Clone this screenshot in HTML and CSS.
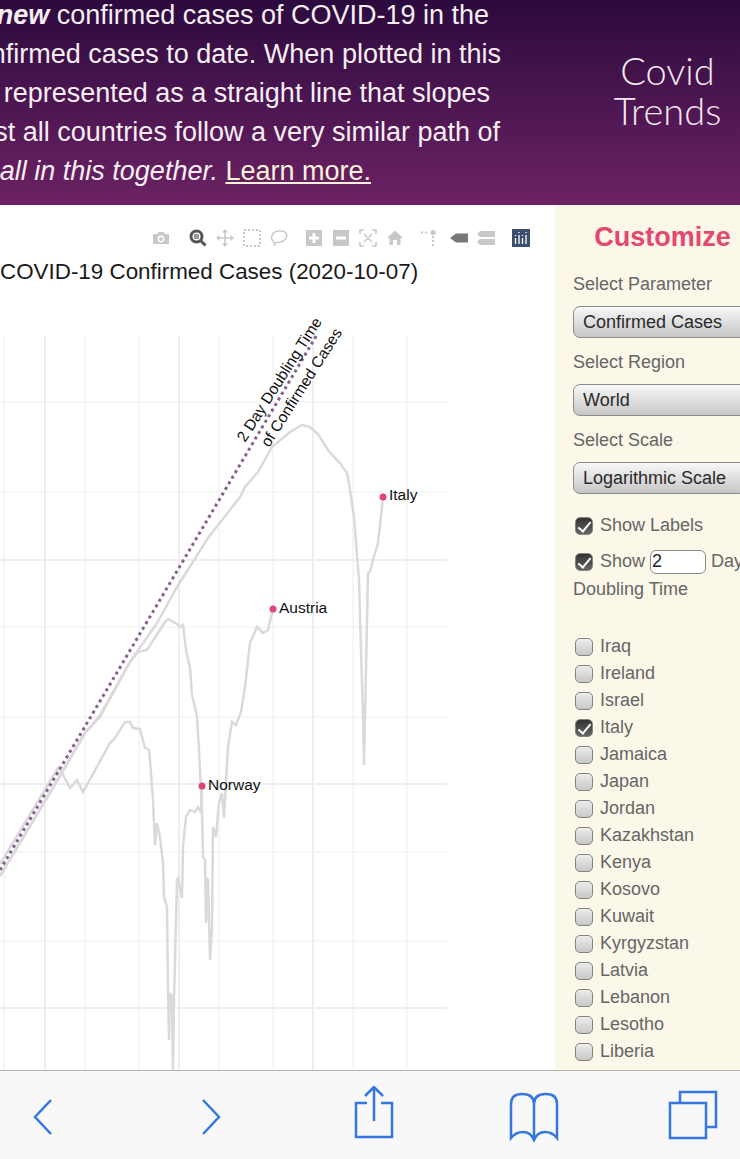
FILE: index.html
```html
<!DOCTYPE html>
<html lang="en">
<head>
  <meta charset="UTF-8">
  <title>Covid Trends</title>
  <link rel="stylesheet" href="styles.css">
</head>
<body>
  <!-- Header -->
  <div class="header">
    <div class="intro">
      <p class="intro-line line-1"><span>of</span><strong><em>new</em></strong><span>confirmed cases of COVID-19 in the</span></p>
      <p class="intro-line line-2">confirmed cases to date. When plotted in this</p>
      <p class="intro-line line-3">is represented as a straight line that slopes</p>
      <p class="intro-line line-4">almost all countries follow a very similar path of</p>
      <p class="intro-line line-5"><em>We're all in this together.</em><a class="learn-more" href="#">Learn more.</a></p>
    </div>
    <div class="brand">Covid<br>Trends</div>
  </div>

  <div class="main">
    <!-- Chart -->
    <div class="chart">
      <div class="modebar">
        <svg class="mode-icon icon-camera" viewBox="0 0 18 18"><path class="fill" d="M1 5h4l1.500-2h5L13 5h4v10H1z"/><circle cx="9" cy="10" r="3.400" fill="#fff"/><circle cx="9" cy="10" r="2" class="fill"/></svg>
        <svg class="mode-icon" viewBox="0 0 18 18"><circle cx="7.500" cy="7.500" r="5.500" fill="none" stroke="#555" stroke-width="3"/><rect x="5" y="5" width="5" height="5" fill="#999"/><path d="M11.500 11.500L16.500 16.500" stroke="#555" stroke-width="3"/></svg>
        <svg class="mode-icon" viewBox="0 0 18 18"><path class="line" d="M9 1v16M1 9h16"/><path class="fill" d="M9 0l3 3.500H6zM9 18l-3-3.500h6zM0 9l3.500-3v6zM18 9l-3.500 3V6z"/></svg>
        <svg class="mode-icon" viewBox="0 0 18 18"><rect class="dash" x="1" y="1" width="16" height="16"/></svg>
        <svg class="mode-icon" viewBox="0 0 18 18"><path class="line" d="M5 14C1 12 .5 7 3.500 4S13 1 15.500 3.500s1 7-2.500 8.500-6 1.500-8 2zM5 14l-.5 3"/></svg>
        <svg class="mode-icon icon-plus" viewBox="0 0 18 18"><path class="fill" fill-rule="evenodd" d="M1 1h16v16H1zM7.500 4v3.500H4v3h3.500V14h3v-3.500H14v-3h-3.500V4z"/></svg>
        <svg class="mode-icon" viewBox="0 0 18 18"><path class="fill" fill-rule="evenodd" d="M1 1h16v16H1zM4 7.500v3h10v-3z"/></svg>
        <svg class="mode-icon" viewBox="0 0 18 18"><path class="line" d="M1 5V1h4M13 1h4v4M17 13v4h-4M5 17H1v-4M5 5l8 8M13 5l-8 8"/></svg>
        <svg class="mode-icon" viewBox="0 0 18 18"><path class="fill" d="M9 1.500L17 9h-2.500v7H11v-5H7v5H3.500V9H1z"/></svg>
        <svg class="mode-icon icon-spike" viewBox="0 0 18 18"><circle class="fill" cx="13" cy="3.500" r="2.500"/><path class="dash" d="M1 3.500h8M13 7v10"/></svg>
        <svg class="mode-icon icon-closest" viewBox="0 0 18 18"><path class="fill-dark" d="M0 9l6-4.500h12v9H6z"/></svg>
        <svg class="mode-icon" viewBox="0 0 18 18"><path class="fill" d="M3 2h15v6H3L0 5zM3 10h15v6H3l-3-3z"/></svg>
        <svg class="mode-icon icon-logo" viewBox="0 0 18 18"><rect width="18" height="18" fill="#3d4f6e"/><path d="M3.500 9v6M7 6v9M10.500 9v6M14 6v9" stroke="#fff" stroke-width="1.300"/><path d="M3.500 6v1M7 3v1M10.500 6v1M14 3v1" stroke="#fff" stroke-width="1.300"/></svg>
      </div>
      <div class="chart-title">COVID-19 Confirmed Cases (2020-10-07)</div>
      <svg class="plot" viewBox="0 300 555 771">
        <g class="grid-major">
          <path d="M45 335V1071M179 335V1071M313 335V1071"/>
          <path d="M0 560H447M0 784H447M0 1008H447"/>
        </g>
        <g class="grid-minor">
          <path d="M4 335V1071M85 335V1071M139 335V1071M219 335V1071M273 335V1071M353 335V1071M407 335V1071"/>
          <path d="M0 402H447M0 492H447M0 627H447M0 717H447M0 852H447M0 941H447"/>
        </g>
        <!-- Italy -->
        <polyline class="trace" points="0,876 60,776 85,733 100,715 130,662 157,623 177,587 208,538 240,497 245,487 258,472 272,447 290,432 302,425 310,427 318,434 328,450 335,458 340,463 347,473 349,483 354,517 359,580 363,717 364,765 368,573 370,572 373,560 378,543 382,507 383,497"/>
        <!-- Austria -->
        <polyline class="trace" points="0,876 60,776 85,733 100,717 130,662 138,652 147,650 165,622 168,619 177,624 180,627 183,625 186,650 190,668 192,695 197,716 199,750 202,810 203,857 205,860 206,923 207,878 208,880 210,960 212,930 213,827 216,837 219,803 222,793 224,818 228,747 232,722 236,725 241,712 245,687 250,643 257,627 263,633 268,630 273,609"/>
        <!-- Norway -->
        <polyline class="trace" points="0,864 58,768 62,773 70,788 77,780 83,792 110,743 115,738 125,722 130,722 133,728 140,729 145,748 149,750 150,760 153,800 155,845 157,823 160,837 163,863 164,897 167,907 168,990 169,1040 170,993 172,997 173,1071 174,1000 177,880 178,878 182,898 183,847 186,817 190,810 195,812 198,807 201,813 202,786"/>
        <line class="doubling" x1="0" y1="870" x2="318" y2="333"/>
        <text class="note" transform="translate(245 443) rotate(-57.500)">2 Day Doubling Time</text>
        <text class="note" transform="translate(269 448) rotate(-57.500)">of Confirmed Cases</text>
        <circle class="marker" cx="383" cy="497" r="3.500"/>
        <circle class="marker" cx="273" cy="609" r="3.500"/>
        <circle class="marker" cx="202" cy="786" r="3.500"/>
        <text class="tag" x="389" y="500">Italy</text>
        <text class="tag" x="279" y="613">Austria</text>
        <text class="tag" x="208" y="790">Norway</text>
      </svg>
    </div>

    <!-- Sidebar -->
    <div class="sidebar">
      <h2 class="sidebar-title">Customize</h2>
      <label class="field-label">Select Parameter</label>
      <select class="field-select"><option>Confirmed Cases</option></select>
      <label class="field-label">Select Region</label>
      <select class="field-select"><option>World</option></select>
      <label class="field-label">Select Scale</label>
      <select class="field-select"><option>Logarithmic Scale</option></select>

      <label class="check-row labels-row"><input type="checkbox" checked> Show Labels</label>
      <label class="check-row show-row"><input type="checkbox" checked> Show <input class="days-input" type="text" value="2"> Day</label>
      <div class="doubling-label">Doubling Time</div>

      <div class="country-list">
        <label class="check-row first-row"><input type="checkbox"> Iraq</label>
        <label class="check-row"><input type="checkbox"> Ireland</label>
        <label class="check-row"><input type="checkbox"> Israel</label>
        <label class="check-row"><input type="checkbox" checked> Italy</label>
        <label class="check-row"><input type="checkbox"> Jamaica</label>
        <label class="check-row"><input type="checkbox"> Japan</label>
        <label class="check-row"><input type="checkbox"> Jordan</label>
        <label class="check-row"><input type="checkbox"> Kazakhstan</label>
        <label class="check-row"><input type="checkbox"> Kenya</label>
        <label class="check-row"><input type="checkbox"> Kosovo</label>
        <label class="check-row"><input type="checkbox"> Kuwait</label>
        <label class="check-row"><input type="checkbox"> Kyrgyzstan</label>
        <label class="check-row"><input type="checkbox"> Latvia</label>
        <label class="check-row"><input type="checkbox"> Lebanon</label>
        <label class="check-row"><input type="checkbox"> Lesotho</label>
        <label class="check-row"><input type="checkbox"> Liberia</label>
        <label class="check-row"><input type="checkbox"></label>
      </div>
    </div>
  </div>

  <!-- Browser toolbar -->
  <div class="toolbar">
    <svg class="tool tool-back" viewBox="0 0 20 56"><path d="M18 14L2 31l16 17"/></svg>
    <svg class="tool tool-forward" viewBox="0 0 20 56"><path d="M2 14l16 17L2 48"/></svg>
    <svg class="tool tool-share" viewBox="0 0 40 56"><path d="M13 17H2v34h36V17H27M20 1v34M11 10l9-9 9 9"/></svg>
    <svg class="tool tool-book" viewBox="0 0 50 56"><path d="M25 54V18C25 11 20 8 13 8S2 11 2 18v34c4-5 8-6 12-6 5 0 9 3 11 8 2-5 6-8 11-8 4 0 8 1 12 6V18C48 11 44 8 37 8S25 11 25 18"/></svg>
    <svg class="tool tool-tabs" viewBox="0 0 50 56"><path d="M2 17h36v35H2zM12 17V6h36v35H38"/></svg>
  </div>
</body>
</html>
```

FILE: styles.css
```css
* {
  box-sizing: border-box;
}

:root {
  --cream: #fbf7e9;
  --pink: #e4476f;
  --label: #666;
  --icon: #c8c8c8;
  --ios-blue: #3477e0;
}

html,
body {
  margin: 0;
  height: 100%;
  overflow: hidden;
}

body {
  display: flex;
  flex-direction: column;
  width: 740px;
  height: 1159px;
  font-family: "Liberation Sans", Arial, sans-serif;
  background: #fff;
}

/* Header */
.header {
  display: flex;
  flex: 0 0 205px;
  overflow: hidden;
  background: linear-gradient(#2c0a3e, #6c2264);
  color: #f6eef2;
}

.intro {
  flex: 0 0 555px;
  min-width: 0;
  margin-top: -4px;
  font-size: 27px;
  line-height: 39px;
}

.intro-line {
  margin: 0;
  white-space: nowrap;
  display: flex;
  justify-content: flex-end;
  gap: 0.278em;
}

.line-1 { padding-right: 66px; }
.line-2 { padding-right: 54px; }
.line-3 { padding-right: 65px; }
.line-4 { padding-right: 55px; }
.line-5 { padding-right: 184px; }

.learn-more {
  color: #fbf1d8;
}

.brand {
  flex: 1;
  padding: 50px 0 0 40px;
  font-family: Lato, sans-serif;
  font-weight: 300;
  font-size: 38px;
  line-height: 40px;
  text-align: center;
  color: #f3e8ef;
}

/* Chart */
.main {
  display: flex;
  flex: 1;
  min-height: 0;
}

.chart {
  flex: 0 0 555px;
  overflow: hidden;
}

.modebar {
  display: flex;
  align-items: center;
  height: 18px;
  margin-top: 24px;
  padding-left: 152px;
}

.mode-icon {
  width: 18px;
  height: 18px;
  margin-right: 9px;
}

.icon-camera { margin-right: 19px; }
.icon-plus { margin-left: 8px; }
.icon-spike { margin-left: 7px; }
.icon-closest { margin-left: 3px; }
.icon-logo { margin-left: 8px; }

.fill { fill: var(--icon); }
.fill-dark { fill: #777; }

.line {
  fill: none;
  stroke: var(--icon);
  stroke-width: 1.500;
}

.dash {
  fill: none;
  stroke: var(--icon);
  stroke-width: 2;
  stroke-dasharray: 2 2;
}

.chart-title {
  height: 29px;
  margin-top: 10px;
  font-size: 22.400px;
  line-height: 29px;
  white-space: nowrap;
  color: #1a1a1a;
}

.plot {
  display: block;
  width: 555px;
  height: 771px;
  margin-top: 14px;
}

.grid-major path {
  fill: none;
  stroke: #eee;
  stroke-width: 2;
}

.grid-minor path {
  fill: none;
  stroke: #f0f0f0;
  stroke-width: 1.200;
}

.trace {
  fill: none;
  stroke: #dadada;
  stroke-width: 2.500;
}

.doubling {
  stroke: #86608f;
  stroke-width: 3;
  stroke-dasharray: 3 3.500;
}

.note {
  font-size: 15.500px;
  fill: #111;
}

.tag {
  font-size: 15.500px;
  fill: #111;
}

.marker {
  fill: #e0457a;
}

/* Sidebar */
.sidebar {
  flex: 0 0 215px;
  display: flex;
  flex-direction: column;
  align-items: flex-start;
  padding-left: 18px;
  background: var(--cream);
  color: var(--label);
  overflow: hidden;
}

.sidebar-title {
  align-self: stretch;
  margin: 15px 0 0;
  padding-right: 18px;
  text-align: center;
  font-size: 27px;
  line-height: 34px;
  color: var(--pink);
}

.field-label {
  margin-bottom: 5px;
  font-size: 18px;
  line-height: 34px;
}

.sidebar-title + .field-label {
  margin-top: 13px;
}

.field-select {
  appearance: none;
  width: 190px;
  height: 32px;
  margin: 0 0 7px;
  padding: 0 9px;
  border: 1.500px solid #8c8c86;
  border-radius: 7px;
  background: linear-gradient(#f8f8f8, #c6c6c6);
  font-family: inherit;
  font-size: 18px;
  color: #2a2a2a;
  flex-shrink: 0;
}

.check-row {
  display: flex;
  align-items: center;
  height: 27px;
  gap: 7px;
  font-size: 18px;
  white-space: nowrap;
  flex-shrink: 0;
}

.check-row input[type="checkbox"] {
  appearance: none;
  position: relative;
  flex: 0 0 18px;
  width: 18px;
  height: 18px;
  margin: 0 0 0 2px;
  border: 1px solid #85847f;
  border-radius: 5px;
  background: linear-gradient(#ececec, #c8c8c8);
}

.check-row input[type="checkbox"]:checked {
  background: linear-gradient(#333, #666);
}

.check-row input[type="checkbox"]:checked::after {
  content: "";
  position: absolute;
  left: 5px;
  top: 1px;
  width: 5px;
  height: 11px;
  border: solid #fff;
  border-width: 0 2.500px 2.500px 0;
  transform: rotate(40deg);
}

.labels-row {
  margin-top: 11px;
}

.show-row {
  margin-top: 9px;
}

.days-input {
  width: 56px;
  height: 24px;
  margin: 0 -2px;
  padding: 0 0 0 1px;
  border: 1px solid #8c8c86;
  border-radius: 6px;
  background: #fff;
  font-family: inherit;
  font-size: 18px;
  color: #222;
}

.doubling-label {
  font-size: 18px;
  line-height: 28px;
}

.country-list {
  display: flex;
  flex-direction: column;
  flex: 1;
  min-height: 0;
  margin-top: 35px;
  overflow: hidden;
}

.first-row {
  margin-top: -5px;
}

/* Browser toolbar */
.toolbar {
  display: flex;
  flex: 0 0 89px;
  padding: 15px 0 0;
  border-top: 1px solid #b4b4b4;
  background: #f8f8f9;
}

.tool {
  height: 56px;
  flex-shrink: 0;
}

.tool path {
  fill: none;
  stroke: var(--ios-blue);
  stroke-width: 2.500;
}

.tool-back { width: 20px; margin-left: 33px; }
.tool-forward { width: 20px; margin-left: 148px; }
.tool-share { width: 40px; margin-left: 133px; }
.tool-book { width: 50px; margin-left: 115px; }
.tool-tabs { width: 50px; margin-left: 109px; }
```
